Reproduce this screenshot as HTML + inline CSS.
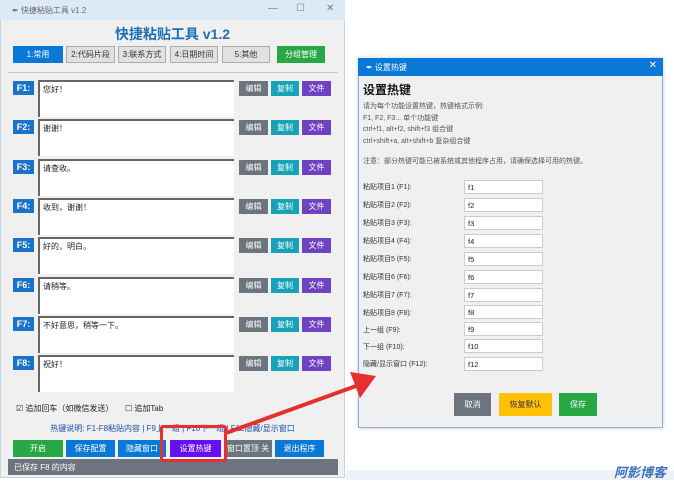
<!DOCTYPE html>
<html><head><meta charset="utf-8"><style>
*{margin:0;padding:0;box-sizing:border-box}
body{width:674px;height:480px;background:#fff;position:relative;overflow:hidden;font-family:"Liberation Sans","Noto Sans CJK SC",sans-serif;font-size:8px;color:#222}
.a{position:absolute}
.btn{position:absolute;color:#fff;font-size:8px;display:flex;align-items:center;justify-content:center}
.tab{position:absolute;top:46px;height:17px;font-size:8px;display:flex;align-items:center;justify-content:center;background:#e1e1e1;border:1px solid #adadad;color:#333}
.lbl{position:absolute;left:13px;width:21px;height:14px;background:#1a73c8;color:#fff;font-weight:bold;font-size:9px;display:flex;align-items:center;justify-content:center}
.ta{position:absolute;left:38px;width:196px;height:37px;background:#fff;border-top:2px solid #666;border-left:2px solid #666;padding:2px 3px;font-size:8px}
.dl{position:absolute;left:363px;font-size:7px;color:#333}
.in{position:absolute;left:464px;width:79px;height:14px;background:#fff;border:1px solid #ccc;font-size:7.5px;padding:2px 3px}
</style></head><body>
<div class="a" style="left:0;top:0;width:345px;height:478px;background:#f0f0f0;border:1px solid #c8d4e0"></div>
<div class="a" style="left:0;top:0;width:345px;height:20px;background:#dce9f7"></div>
<div class="a" style="left:12px;top:5px;font-size:8px;color:#666">✒ 快捷粘贴工具 v1.2</div>
<div class="a" style="left:268px;top:3px;font-size:10px;color:#777">—</div>
<div class="a" style="left:296px;top:3px;font-size:10px;color:#777">☐</div>
<div class="a" style="left:326px;top:3px;font-size:10px;color:#777">✕</div>
<div class="a" style="left:0;width:345px;top:24px;text-align:center;font-size:14px;font-weight:bold;color:#1e6fb5">快捷粘贴工具 v1.2</div>
<div class="tab" style="left:13px;width:50px;background:#0a78d7;color:#fff;border-color:#0a78d7">1:常用</div>
<div class="tab" style="left:66px;width:49px">2:代码片段</div>
<div class="tab" style="left:118px;width:48px">3:联系方式</div>
<div class="tab" style="left:170px;width:48px">4:日期时间</div>
<div class="tab" style="left:222px;width:48px">5:其他</div>
<div class="tab" style="left:277px;width:48px;background:#28a745;color:#fff;border-color:#28a745">分组管理</div>
<div class="a" style="left:8px;top:72px;width:330px;height:1px;background:#c8c8c8"></div>

<div class="lbl" style="top:81px">F1:</div><div class="ta" style="top:80px">您好！</div>
<div class="lbl" style="top:120px">F2:</div><div class="ta" style="top:119px">谢谢！</div>
<div class="lbl" style="top:160px">F3:</div><div class="ta" style="top:159px">请查收。</div>
<div class="lbl" style="top:199px">F4:</div><div class="ta" style="top:198px">收到，谢谢！</div>
<div class="lbl" style="top:238px">F5:</div><div class="ta" style="top:237px">好的，明白。</div>
<div class="lbl" style="top:278px">F6:</div><div class="ta" style="top:277px">请稍等。</div>
<div class="lbl" style="top:317px">F7:</div><div class="ta" style="top:316px">不好意思，稍等一下。</div>
<div class="lbl" style="top:356px">F8:</div><div class="ta" style="top:355px">祝好！</div>

<div id="bts"></div>
<div class="btn" style="left:239px;top:81px;width:29px;height:15px;background:#6c757d">编辑</div><div class="btn" style="left:271px;top:81px;width:28px;height:15px;background:#17a2b8">复制</div><div class="btn" style="left:302px;top:81px;width:29px;height:15px;background:#6f42c1">文件</div>
<div class="btn" style="left:239px;top:120px;width:29px;height:15px;background:#6c757d">编辑</div><div class="btn" style="left:271px;top:120px;width:28px;height:15px;background:#17a2b8">复制</div><div class="btn" style="left:302px;top:120px;width:29px;height:15px;background:#6f42c1">文件</div>
<div class="btn" style="left:239px;top:160px;width:29px;height:15px;background:#6c757d">编辑</div><div class="btn" style="left:271px;top:160px;width:28px;height:15px;background:#17a2b8">复制</div><div class="btn" style="left:302px;top:160px;width:29px;height:15px;background:#6f42c1">文件</div>
<div class="btn" style="left:239px;top:199px;width:29px;height:15px;background:#6c757d">编辑</div><div class="btn" style="left:271px;top:199px;width:28px;height:15px;background:#17a2b8">复制</div><div class="btn" style="left:302px;top:199px;width:29px;height:15px;background:#6f42c1">文件</div>
<div class="btn" style="left:239px;top:238px;width:29px;height:15px;background:#6c757d">编辑</div><div class="btn" style="left:271px;top:238px;width:28px;height:15px;background:#17a2b8">复制</div><div class="btn" style="left:302px;top:238px;width:29px;height:15px;background:#6f42c1">文件</div>
<div class="btn" style="left:239px;top:278px;width:29px;height:15px;background:#6c757d">编辑</div><div class="btn" style="left:271px;top:278px;width:28px;height:15px;background:#17a2b8">复制</div><div class="btn" style="left:302px;top:278px;width:29px;height:15px;background:#6f42c1">文件</div>
<div class="btn" style="left:239px;top:317px;width:29px;height:15px;background:#6c757d">编辑</div><div class="btn" style="left:271px;top:317px;width:28px;height:15px;background:#17a2b8">复制</div><div class="btn" style="left:302px;top:317px;width:29px;height:15px;background:#6f42c1">文件</div>
<div class="btn" style="left:239px;top:356px;width:29px;height:15px;background:#6c757d">编辑</div><div class="btn" style="left:271px;top:356px;width:28px;height:15px;background:#17a2b8">复制</div><div class="btn" style="left:302px;top:356px;width:29px;height:15px;background:#6f42c1">文件</div>

<div class="a" style="left:16px;top:403px;font-size:8px">☑ 追加回车（如微信发送）</div>
<div class="a" style="left:125px;top:403px;font-size:8px">☐ 追加Tab</div>
<div class="a" style="left:0;width:345px;top:423px;text-align:center;font-size:8px;color:#1e4fa8">热键说明: F1-F8粘贴内容 | F9上一组 | F10下一组 | F12隐藏/显示窗口</div>
<div class="btn" style="left:13px;top:440px;width:50px;height:17px;background:#28a745">开启</div>
<div class="btn" style="left:66px;top:440px;width:49px;height:17px;background:#0a78d7">保存配置</div>
<div class="btn" style="left:118px;top:440px;width:48px;height:17px;background:#0a78d7">隐藏窗口</div>
<div class="btn" style="left:170px;top:440px;width:51px;height:17px;background:#6610f2">设置热键</div>
<div class="btn" style="left:224px;top:440px;width:48px;height:17px;background:#6c757d">窗口置顶 关</div>
<div class="btn" style="left:275px;top:440px;width:49px;height:17px;background:#0a78d7">退出程序</div>
<div class="a" style="left:8px;top:459px;width:330px;height:16px;background:#6c757d;color:#fff;font-size:8px;padding:3px 6px">已保存 F8 的内容</div>
<div class="a" style="left:160px;top:425px;width:67px;height:37px;border:3px solid #e53030;border-radius:3px"></div>

<div class="a" style="left:358px;top:58px;width:305px;height:370px;background:#f0f0f0;border:1px solid #8ab0d8;box-shadow:0 0 4px rgba(0,0,0,.2)"></div>
<div class="a" style="left:358px;top:58px;width:305px;height:18px;background:#0a78d7;color:#fff;font-size:8px;padding:4px 8px">✒ 设置热键<span style="position:absolute;right:6px;top:2px;font-size:10px">✕</span></div>
<div class="a" style="left:363px;top:81px;font-size:12px;font-weight:bold;color:#111">设置热键</div>
<div class="a" style="left:363px;top:101px;font-size:7px;color:#555;line-height:11.5px">请为每个功能设置热键，热键格式示例:<br>F1, F2, F3... 单个功能键<br>ctrl+f1, alt+f2, shift+f3 组合键<br>ctrl+shift+a, alt+shift+b 复杂组合键</div>
<div class="a" style="left:363px;top:156px;font-size:7px;color:#555">注意：部分热键可能已被系统或其他程序占用，请确保选择可用的热键。</div>
<div class="dl" style="top:182px">粘贴项目1 (F1):</div><div class="in" style="top:180px">f1</div>
<div class="dl" style="top:200px">粘贴项目2 (F2):</div><div class="in" style="top:198px">f2</div>
<div class="dl" style="top:218px">粘贴项目3 (F3):</div><div class="in" style="top:216px">f3</div>
<div class="dl" style="top:236px">粘贴项目4 (F4):</div><div class="in" style="top:234px">f4</div>
<div class="dl" style="top:254px">粘贴项目5 (F5):</div><div class="in" style="top:252px">f5</div>
<div class="dl" style="top:272px">粘贴项目6 (F6):</div><div class="in" style="top:270px">f6</div>
<div class="dl" style="top:290px">粘贴项目7 (F7):</div><div class="in" style="top:288px">f7</div>
<div class="dl" style="top:308px">粘贴项目8 (F8):</div><div class="in" style="top:305px">f8</div>
<div class="dl" style="top:325px">上一组 (F9):</div><div class="in" style="top:322px">f9</div>
<div class="dl" style="top:342px">下一组 (F10):</div><div class="in" style="top:339px">f10</div>
<div class="dl" style="top:359px">隐藏/显示窗口 (F12):</div><div class="in" style="top:357px">f12</div>
<div class="btn" style="left:454px;top:393px;width:37px;height:23px;background:#6c757d">取消</div>
<div class="btn" style="left:499px;top:393px;width:53px;height:23px;background:#ffc107;color:#333">恢复默认</div>
<div class="btn" style="left:559px;top:393px;width:38px;height:23px;background:#28a745">保存</div>

<svg class="a" style="left:0;top:0" width="674" height="480"><path d="M226 433 L356 386" stroke="#e53030" stroke-width="4"/><polygon points="376,376 350,372 360,398" fill="#e53030"/></svg>
<div class="a" style="left:346px;top:470px;width:328px;height:10px;background:#eef2f8"></div>
<div class="a" style="left:614px;top:462px;font-size:13px;font-weight:bold;font-style:italic;color:#3a6fc0">阿影博客</div>
</body></html>
